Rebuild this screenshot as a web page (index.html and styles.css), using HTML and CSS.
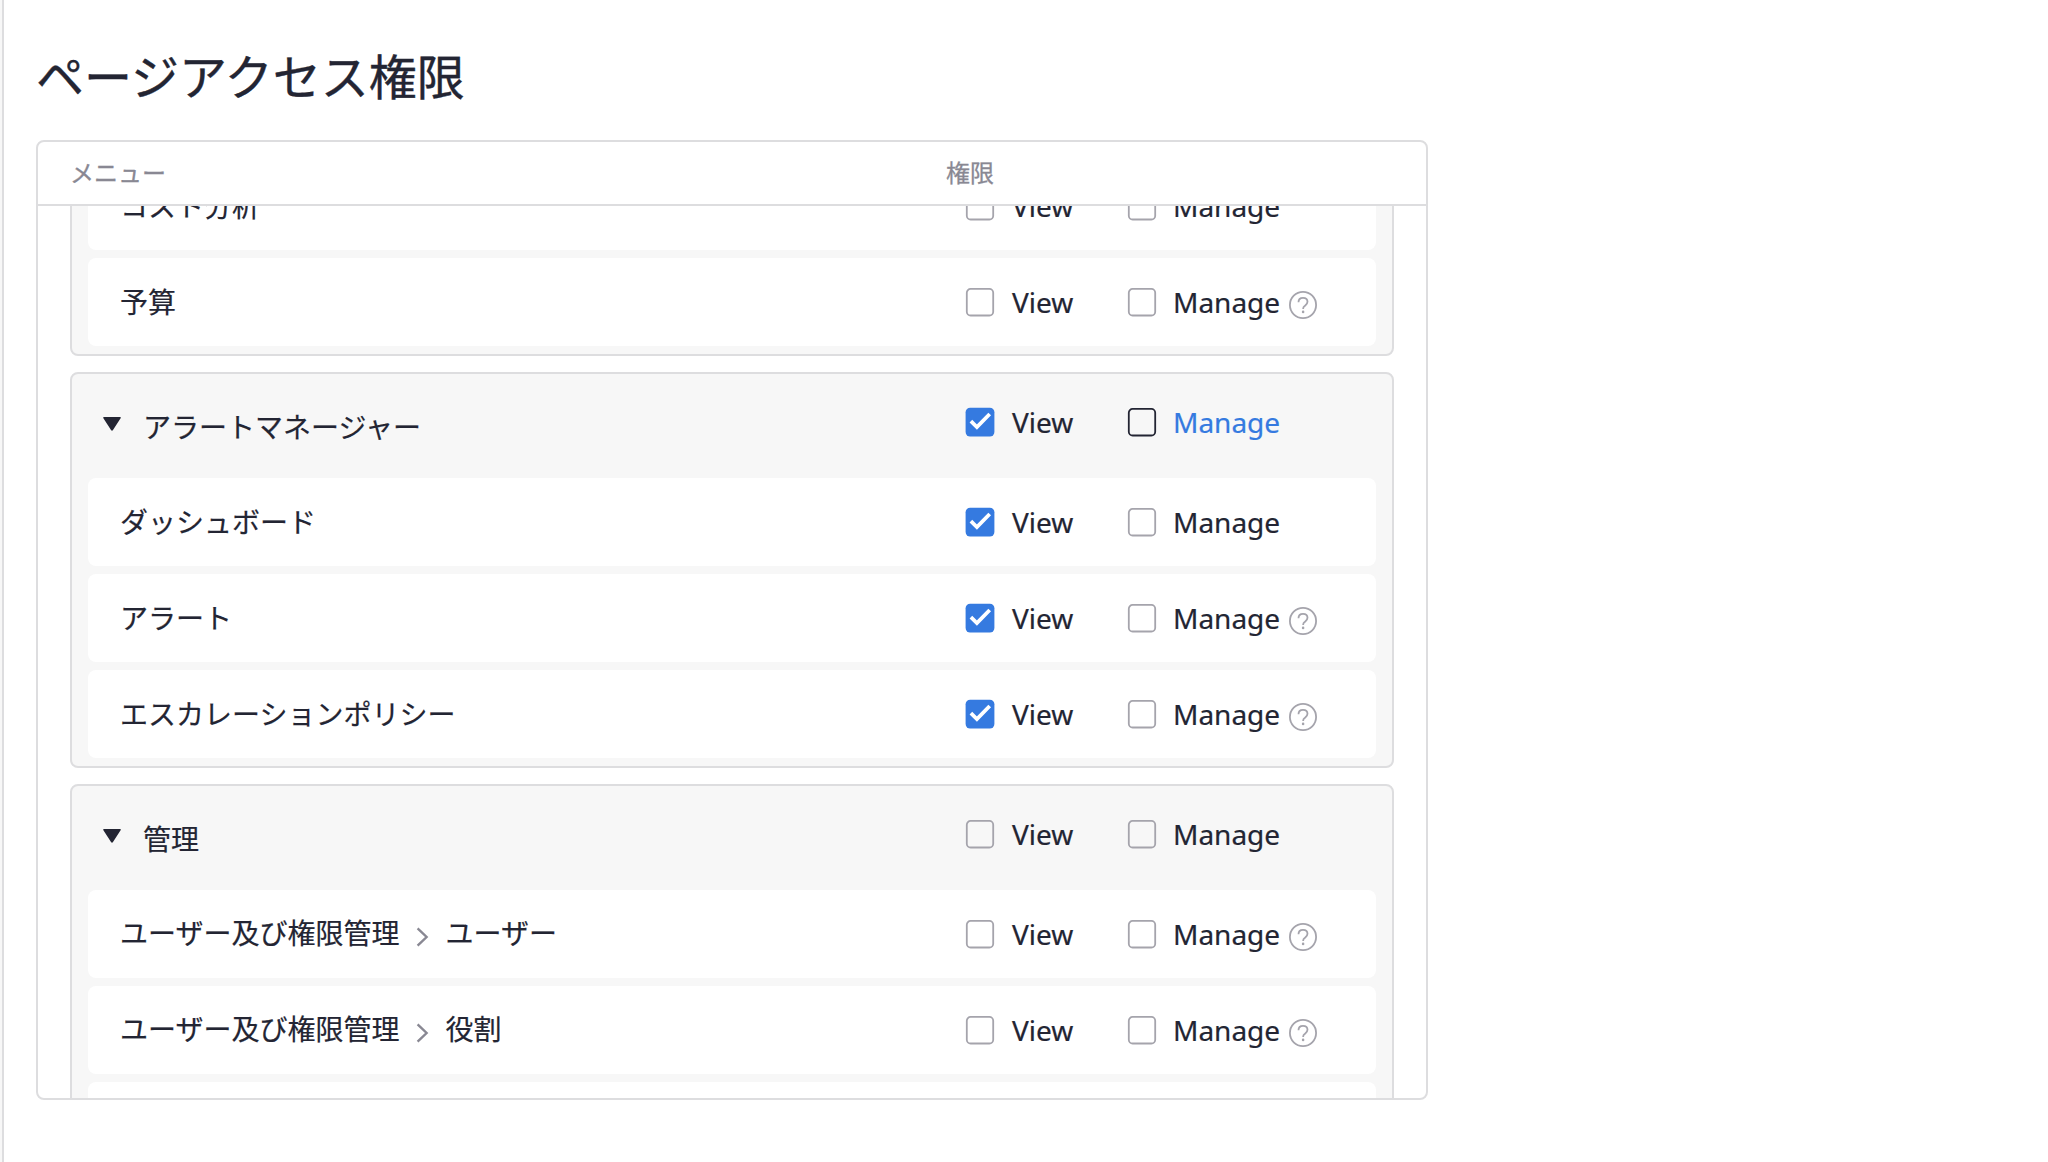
FILE: index.html
```
<!DOCTYPE html>
<html lang="ja">
<head>
<meta charset="utf-8">
<title>ページアクセス権限</title>
<link rel="stylesheet" href="styles.css">
</head>
<body>
<svg class="defs" width="0" height="0" aria-hidden="true">
  <symbol id="box" viewBox="0 0 30 30"><rect x="1.8" y="1.9" width="26.4" height="26.6" rx="3.8" fill="#fff" fill-opacity="var(--fill, 1)" stroke="currentColor" stroke-width="1.8"/></symbol>
  <symbol id="checked" viewBox="0 0 30 30"><rect x="0.6" y="0.8" width="28.8" height="28.8" rx="4.5" fill="#357ae0"/><path d="M5.9 14.2 11.9 20 24.7 7" fill="none" stroke="#fff" stroke-width="3.8"/></symbol>
  <symbol id="help" viewBox="0 0 28 28"><circle cx="14" cy="14" r="13.1" fill="none" stroke="currentColor" stroke-width="1.8"/><path d="M9.5 11.2C9.5 8.5 11.3 6.8 14 6.8s4.5 1.7 4.5 4c0 2.1-1.3 3-2.6 4-1.3.9-1.8 1.5-1.8 3.1" fill="none" stroke="currentColor" stroke-width="1.8"/><circle cx="14.1" cy="20.9" r="1.3" fill="currentColor"/></symbol>
  <symbol id="chevron" viewBox="0 0 14 20"><path d="M1.6 1.3 10.6 10 1.6 18.7" fill="none" stroke="currentColor" stroke-width="2.4"/></symbol>
  <symbol id="triangle" viewBox="0 0 18 14"><path d="M1 0H17Q18.3 0 17.6 1.2L10 13Q9 14.6 8 13L.4 1.2Q-.3 0 1 0Z" fill="currentColor"/></symbol>
</svg>
<main class="page">
  <h1 class="title">ページアクセス権限</h1>
  <section class="panel">
    <header class="panel-head">
      <span class="col-menu">メニュー</span>
      <span class="col-perm">権限</span>
    </header>
    <div class="panel-body">
      <div class="groups">
        <div class="group">
          <div class="row">
            <div class="name">コスト分析</div>
            <label class="perm"><svg class="check"><use href="#box"/></svg><span>View</span></label>
            <label class="perm manage"><svg class="check"><use href="#box"/></svg><span>Manage</span></label>
          </div>
          <div class="row">
            <div class="name">予算</div>
            <label class="perm"><svg class="check"><use href="#box"/></svg><span>View</span></label>
            <label class="perm manage"><svg class="check"><use href="#box"/></svg><span>Manage</span><svg class="help"><use href="#help"/></svg></label>
          </div>
        </div>
        <div class="group">
          <div class="group-head">
            <div class="name"><svg class="toggle"><use href="#triangle"/></svg><span>アラートマネージャー</span></div>
            <label class="perm"><svg class="check"><use href="#checked"/></svg><span>View</span></label>
            <label class="perm manage hovered"><svg class="check"><use href="#box"/></svg><span>Manage</span></label>
          </div>
          <div class="row">
            <div class="name">ダッシュボード</div>
            <label class="perm"><svg class="check"><use href="#checked"/></svg><span>View</span></label>
            <label class="perm manage"><svg class="check"><use href="#box"/></svg><span>Manage</span></label>
          </div>
          <div class="row">
            <div class="name">アラート</div>
            <label class="perm"><svg class="check"><use href="#checked"/></svg><span>View</span></label>
            <label class="perm manage"><svg class="check"><use href="#box"/></svg><span>Manage</span><svg class="help"><use href="#help"/></svg></label>
          </div>
          <div class="row">
            <div class="name">エスカレーションポリシー</div>
            <label class="perm"><svg class="check"><use href="#checked"/></svg><span>View</span></label>
            <label class="perm manage"><svg class="check"><use href="#box"/></svg><span>Manage</span><svg class="help"><use href="#help"/></svg></label>
          </div>
        </div>
        <div class="group">
          <div class="group-head">
            <div class="name"><svg class="toggle"><use href="#triangle"/></svg><span>管理</span></div>
            <label class="perm"><svg class="check"><use href="#box"/></svg><span>View</span></label>
            <label class="perm manage"><svg class="check"><use href="#box"/></svg><span>Manage</span></label>
          </div>
          <div class="row">
            <div class="name path"><span>ユーザー及び権限管理</span><svg class="chevron"><use href="#chevron"/></svg><span>ユーザー</span></div>
            <label class="perm"><svg class="check"><use href="#box"/></svg><span>View</span></label>
            <label class="perm manage"><svg class="check"><use href="#box"/></svg><span>Manage</span><svg class="help"><use href="#help"/></svg></label>
          </div>
          <div class="row">
            <div class="name path"><span>ユーザー及び権限管理</span><svg class="chevron"><use href="#chevron"/></svg><span>役割</span></div>
            <label class="perm"><svg class="check"><use href="#box"/></svg><span>View</span></label>
            <label class="perm manage"><svg class="check"><use href="#box"/></svg><span>Manage</span><svg class="help"><use href="#help"/></svg></label>
          </div>
          <div class="row"></div>
        </div>
      </div>
    </div>
  </section>
</main>
</body>
</html>
```
FILE: styles.css
```
* { box-sizing: border-box; }

body {
  margin: 0;
  height: 1162px;
  overflow: hidden;
  padding-left: 2px;
  background: #f7f7f7;
  color: #232533;
  font-family: "Noto Sans", "Noto Sans CJK JP", sans-serif;
  font-size: 28px;
}

.defs { display: block; height: 0; }

.page {
  height: 1162px;
  padding: 40px 0 0 32px;
  border-left: 2px solid #dddddf;
  background: #fff;
}

.title {
  margin: 0 0 28px;
  height: 72px;
  font-size: 48px;
  font-weight: 400;
  line-height: 73px;
  -webkit-text-stroke: 0.4px currentColor;
}

.panel {
  width: 1392px;
  height: 960px;
  border: 2px solid #dddddf;
  border-radius: 8px;
  overflow: hidden;
}

.panel-head {
  display: flex;
  height: 64px;
  padding-left: 32px;
  border-bottom: 2px solid #dddddf;
  color: #898893;
  font-size: 24px;
  line-height: 61px;
  -webkit-text-stroke: 0.3px currentColor;
}

.col-menu { width: 876px; }

.panel-body {
  height: 892px;
  padding: 0 32px;
  overflow: hidden;
}

.groups {
  display: flex;
  flex-direction: column;
  gap: 16px;
  margin-top: -54px;
}

.group {
  display: flex;
  flex-direction: column;
  gap: 8px;
  padding: 8px 16px;
  border: 2px solid #dddddf;
  border-radius: 8px;
  background: #f7f7f7;
}

.row,
.group-head {
  display: flex;
  align-items: center;
  height: 88px;
  padding-left: 32px;
  border-radius: 8px;
  background: #fff;
}

.group-head {
  --fill: 0;
  padding: 0 0 8px 15px;
  background: none;
}

.name {
  display: flex;
  align-items: center;
  width: 845px;
  line-height: 40px;
  -webkit-text-stroke: 0.2px currentColor;
}

.group-head .name {
  width: 862px;
  padding-top: 9px;
}

.toggle {
  width: 18px;
  height: 14px;
  margin: -5px 22px 0 0;
}

.path { padding-bottom: 2px; }

.chevron {
  width: 14px;
  height: 20px;
  margin: 8px 15px 0 17px;
  color: #898893;
}

.perm {
  display: flex;
  align-items: center;
  width: 162px;
  height: 40px;
  white-space: nowrap;
  line-height: 40px;
  -webkit-text-stroke: 0.2px currentColor;
}

.check {
  width: 30px;
  height: 30px;
  margin-right: 17px;
  flex: none;
  color: #a5a4ac;
}

.manage .check { margin-right: 16px; }

.hovered { color: #357ae0; }
.hovered .check { color: #232533; }

.help {
  width: 28px;
  height: 28px;
  margin: 6px 0 0 9px;
  flex: none;
  color: #a5a4ac;
}
```
